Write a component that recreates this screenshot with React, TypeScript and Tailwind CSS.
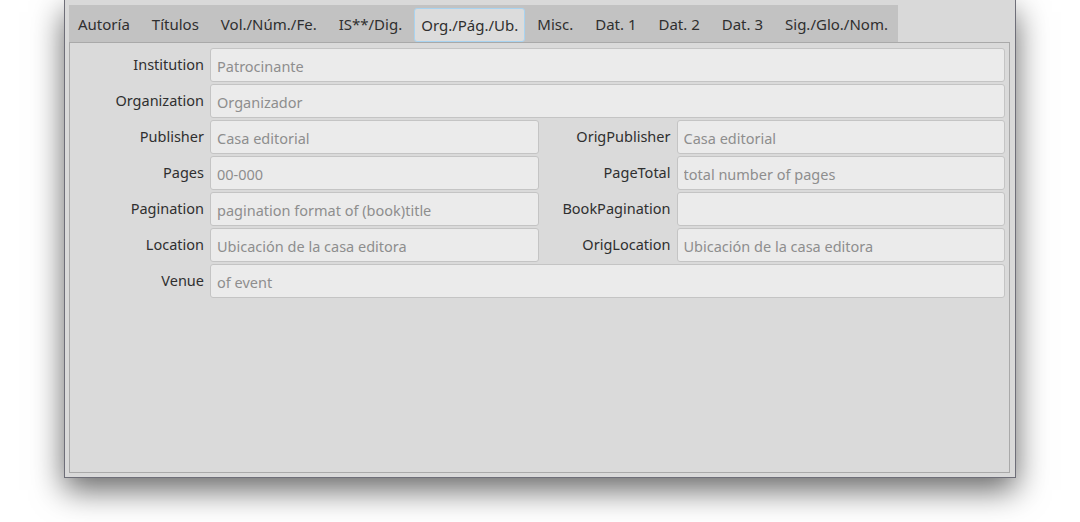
import React from "react";

const tabs = [
  "Autoría",
  "Títulos",
  "Vol./Núm./Fe.",
  "IS**/Dig.",
  "Org./Pág./Ub.",
  "Misc.",
  "Dat. 1",
  "Dat. 2",
  "Dat. 3",
  "Sig./Glo./Nom.",
];

type Field = { label: string; placeholder: string; wide?: boolean };

const rows: Field[][] = [
  [{ label: "Institution", placeholder: "Patrocinante", wide: true }],
  [{ label: "Organization", placeholder: "Organizador", wide: true }],
  [
    { label: "Publisher", placeholder: "Casa editorial" },
    { label: "OrigPublisher", placeholder: "Casa editorial" },
  ],
  [
    { label: "Pages", placeholder: "00-000" },
    { label: "PageTotal", placeholder: "total number of pages" },
  ],
  [
    { label: "Pagination", placeholder: "pagination format of (book)title" },
    { label: "BookPagination", placeholder: "" },
  ],
  [
    { label: "Location", placeholder: "Ubicación de la casa editora" },
    { label: "OrigLocation", placeholder: "Ubicación de la casa editora" },
  ],
  [{ label: "Venue", placeholder: "of event", wide: true }],
];

function FieldInput({ field }: { field: Field }) {
  return (
    <input
      className={
        "h-[34px] w-full rounded-[3px] border border-[#c4c4c4] bg-[#ebebeb] px-[6px] pt-[1px] text-[14.5px] text-[#333] outline-none placeholder:text-[#8e8e8e]" +
        (field.wide ? " col-span-3" : "")
      }
      placeholder={field.placeholder}
    />
  );
}

export default function App() {
  const active = "Org./Pág./Ub.";
  return (
    <div
      className="h-[522px] w-[1080px] overflow-hidden bg-white"
      style={{ fontFamily: '"Noto Sans", "Open Sans", sans-serif' }}
    >
      <div className="ml-[64px] flex h-[478px] w-[952px] flex-col border-x border-b border-[#6e6e78] bg-[#d9d9d9] pb-[4px] pl-[4px] pr-[5px] pt-[5px] shadow-[0_12px_30px_rgba(0,0,0,0.6)]">
        <div className="flex h-[37px] w-[829px] items-stretch bg-[#c2c2c2]">
          {tabs.map((t, i) =>
            t === active ? (
              <div key={t} className="flex items-stretch px-[1px] pt-[3px]">
                <div className="flex items-center whitespace-nowrap rounded-[3px] border border-[#a8d3f0] bg-[#dcdcdc] px-[6px] pt-[1px] text-[15px] text-[#2f2f2f]">
                  {t}
                </div>
              </div>
            ) : (
              <div
                key={t}
                className={
                  "flex items-center whitespace-nowrap pr-[11px] pt-[2px] text-[15px] text-[#2f2f2f]" +
                  (i === 0 ? " pl-[9px]" : " pl-[11px]")
                }
              >
                {t}
              </div>
            )
          )}
        </div>
        <div className="flex-1 border border-[#a9a9a9] bg-[#dadada] pb-[4px] pr-[4px] pt-[5px]">
          <div className="grid grid-cols-[134px_1fr_126px_1fr] gap-x-[6px] gap-y-[2px]">
            {rows.map((row) =>
              row.map((f) => (
                <React.Fragment key={f.label}>
                  <div className="flex h-[34px] items-center justify-end pb-[1px] text-[14.5px] text-[#2f2f2f]">
                    {f.label}
                  </div>
                  <FieldInput field={f} />
                </React.Fragment>
              ))
            )}
          </div>
        </div>
      </div>
    </div>
  );
}
